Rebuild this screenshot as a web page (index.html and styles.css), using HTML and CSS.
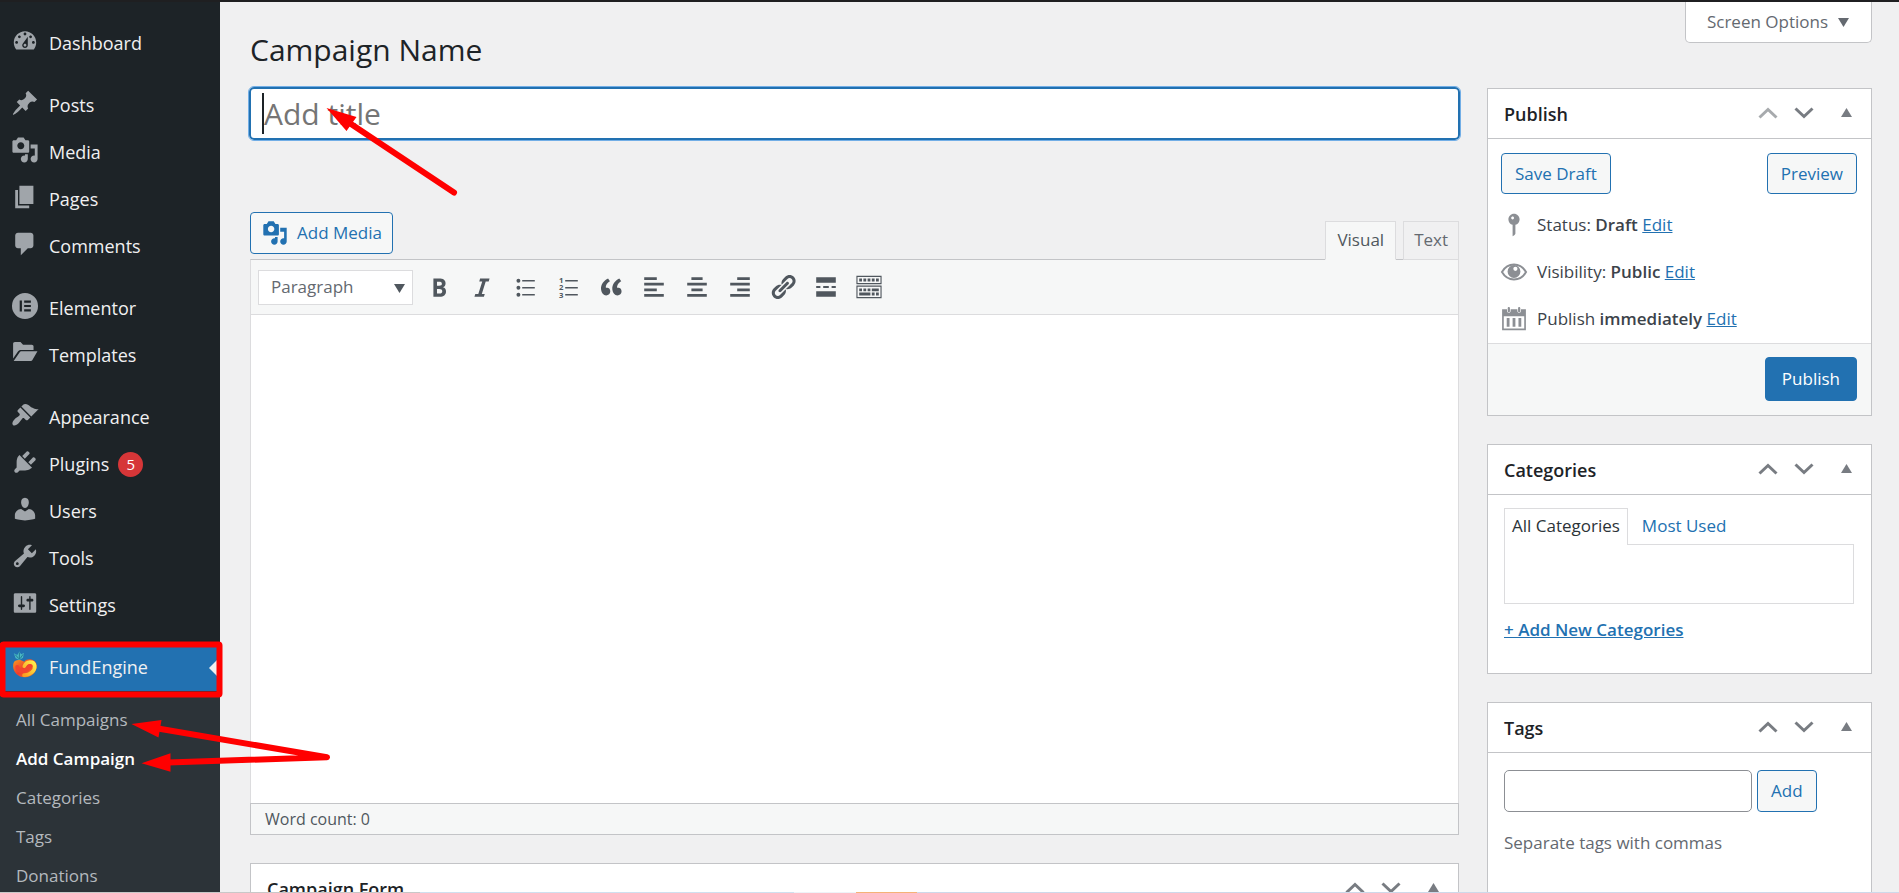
FILE: index.html
```html
<!DOCTYPE html>
<html lang="en">
<head>
    <meta charset="UTF-8">
    <meta name="viewport" content="width=device-width, initial-scale=1.0">
    <title>Add Campaign</title>
    <link rel="stylesheet" href="styles.css">
</head>
<body>
    <!-- shared shapes -->
    <svg class="defs" aria-hidden="true">
        <symbol id="media" viewBox="0 0 20 20">
            <path d="M13 11V4c0-.55-.45-1-1-1h-1.67L9 1H5L3.67 3H2c-.55 0-1 .45-1 1v7c0 .55.45 1 1 1h10c.55 0 1-.45 1-1zM7 4.5c1.38 0 2.5 1.12 2.5 2.5S8.38 9.5 7 9.5 4.500 8.380 4.500 7 5.620 4.500 7 4.500zM14 6h5v10.500c0 1.380-1.120 2.500-2.500 2.500S14 17.880 14 16.500s1.120-2.500 2.500-2.500c.17 0 .34.02.5.05V9h-3V6zm-4 8.050V13h2v3.500c0 1.380-1.120 2.500-2.500 2.500S7 17.880 7 16.500 8.120 14 9.500 14c.17 0 .34.02.5.05z"/>
        </symbol>
        <symbol id="up" viewBox="0 0 20 12"><path d="M1.500 10.500L10 2.500l8.500 8" fill="none" stroke="currentColor" stroke-width="3"/></symbol>
        <symbol id="down" viewBox="0 0 20 12"><path d="M1.500 1.500L10 9.500l8.500-8" fill="none" stroke="currentColor" stroke-width="3"/></symbol>
        <symbol id="toggle" viewBox="0 0 11 9"><path d="M5.500 0L11 9H0z"/></symbol>
        <symbol id="caret" viewBox="0 0 11 9"><path d="M0 0h11L5.500 9z"/></symbol>
    </svg>

    <div class="topbar"></div>
    <div class="admin">
        <nav class="sidebar" aria-label="Main menu">
            <ul class="menu">
                <li><a href="#"><svg class="icon" viewBox="0 0 20 20"><path fill-rule="evenodd" d="M3.76 16h12.48c1.1-1.37 1.76-3.11 1.76-5 0-4.42-3.58-8-8-8s-8 3.58-8 8c0 1.89.66 3.63 1.76 5zM10 4c.55 0 1 .45 1 1s-.45 1-1 1-1-.45-1-1 .45-1 1-1zM6 6c.55 0 1 .45 1 1s-.45 1-1 1-1-.45-1-1 .45-1 1-1zm8 0c.55 0 1 .45 1 1s-.45 1-1 1-1-.45-1-1 .45-1 1-1zm-5.370 5.550L12 7v6c0 1.1-.9 2-2 2s-2-.9-2-2c0-.57.24-1.080.63-1.450zM4 10c.55 0 1 .45 1 1s-.45 1-1 1-1-.45-1-1 .45-1 1-1zm12 0c.55 0 1 .45 1 1s-.45 1-1 1-1-.45-1-1 .45-1 1-1zm-5 3c0-.55-.45-1-1-1s-1 .45-1 1 .45 1 1 1 1-.45 1-1z"/></svg><span>Dashboard</span></a></li>
                <li class="separated"><a href="#"><svg class="icon" viewBox="0 0 20 20"><path d="M10.440 3.020l1.820-1.820 6.360 6.350-1.830 1.820c-1.050-.68-2.480-.57-3.410.36l-.75.75c-.92.93-1.040 2.350-.35 3.410l-1.830 1.820-2.410-2.410-2.800 2.790c-.42.42-3.380 2.710-3.800 2.290s1.860-3.390 2.280-3.810l2.790-2.790L4.100 9.360l1.830-1.820c1.050.69 2.480.57 3.400-.36l.75-.75c.93-.92 1.050-2.350.36-3.410z"/></svg><span>Posts</span></a></li>
                <li><a href="#"><svg class="icon"><use href="#media"/></svg><span>Media</span></a></li>
                <li><a href="#"><svg class="icon" viewBox="0 0 20 20"><path d="M6 15V2h10v13H6zm-1 1h8v2H3V5h2v11z"/></svg><span>Pages</span></a></li>
                <li><a href="#"><svg class="icon" viewBox="0 0 20 20"><path d="M5 2h9c1.100 0 2 .9 2 2v7c0 1.100-.9 2-2 2h-2l-5 5v-5H5c-1.100 0-2-.9-2-2V4c0-1.100.9-2 2-2z"/></svg><span>Comments</span></a></li>
                <li class="separated"><a href="#"><svg class="icon" viewBox="0 0 20 20"><path fill-rule="evenodd" d="M10 .7a9.300 9.300 0 1 1 0 18.600 9.300 9.300 0 0 1 0-18.600zM6.200 6v8h1.600V6zM9.400 6v1.600h4.800V6zm0 3.200v1.600h4.800V9.200zm0 3.200V14h4.800v-1.600z"/></svg><span>Elementor</span></a></li>
                <li><a href="#"><svg class="icon" viewBox="0 0 20 20"><path d="M1.500 14V3.500c0-.8.500-1.300 1.300-1.300h4l1.800 1.900h6.200c.8 0 1.300.5 1.300 1.300v2.400H7.200c-.9 0-1.500.3-2.100 1z"/><path d="M1.900 15.800l4.200-6.200c.4-.6.900-.8 1.600-.8h11.200l-3.400 5.900c-.4.7-.9 1.100-1.800 1.100z"/></svg><span>Templates</span></a></li>
                <li class="separated"><a href="#"><svg class="icon" viewBox="0 0 20 20"><path d="M14.480 11.060L7.410 3.990l1.500-1.500c.5-.56 2.300-.47 3.510.32 1.210.8 1.430 1.280 2.910 2.100 1.180.64 2.450 1.260 4.450.85zm-.71.71L6.700 4.700 4.930 6.470c-.39.39-.39 1.020 0 1.410l1.060 1.060c.39.39.39 1.030 0 1.420-.6.600-1.430 1.110-2.210 1.690-.35.26-.7.530-1.010.84C1.430 14.230.4 16.080 1.400 17.070c.99 1 2.840-.03 4.180-1.360.31-.31.58-.66.85-1.020.57-.78 1.080-1.610 1.690-2.210.39-.39 1.020-.39 1.410 0l1.060 1.060c.39.39 1.020.39 1.410 0z"/></svg><span>Appearance</span></a></li>
                <li><a href="#"><svg class="icon" viewBox="0 0 20 20"><path d="M13.110 4.360L9.870 7.600 8 5.730l3.240-3.240c.35-.34 1.050-.2 1.560.32.52.51.66 1.210.31 1.550zm-8 1.770l.91-1.120 9.010 9.010-1.190.84c-.71.71-2.630 1.160-3.820 1.160H6.140L4.900 17.260c-.59.59-1.540.59-2.120 0-.59-.58-.59-1.530 0-2.120l1.240-1.240v-3.880c0-1.130.4-3.190 1.090-3.890zm7.260 3.970l3.240-3.240c.34-.35 1.040-.21 1.550.31.52.51.66 1.210.31 1.550l-3.240 3.250z"/></svg><span>Plugins</span><span class="count">5</span></a></li>
                <li><a href="#"><svg class="icon" viewBox="0 0 20 20"><path d="M10 9.250c-2.270 0-2.730-3.440-2.730-3.440C7 4.020 7.820 2 9.970 2c2.160 0 2.980 2.020 2.710 3.810 0 0-.41 3.440-2.680 3.440zm0 2.570L12.720 10c2.390 0 4.520 2.330 4.520 4.530v2.490s-3.650 1.130-7.240 1.130c-3.650 0-7.240-1.130-7.240-1.130v-2.490c0-2.250 1.940-4.480 4.470-4.480z"/></svg><span>Users</span></a></li>
                <li><a href="#"><svg class="icon" viewBox="0 0 20 20"><path fill-rule="evenodd" d="M16.680 9.770c-1.340 1.340-3.300 1.670-4.950.99l-5.410 6.520c-.99.99-2.590.99-3.580 0s-.99-2.590 0-3.570l6.520-5.420c-.68-1.650-.35-3.610.99-4.950 1.280-1.280 3.120-1.620 4.720-1.060l-2.890 2.890 2.820 2.820 2.860-2.870c.53 1.580.18 3.390-1.080 4.650zM3.810 16.210c.4.390 1.040.39 1.430 0 .4-.4.4-1.040 0-1.430-.39-.4-1.030-.4-1.430 0-.39.39-.39 1.030 0 1.430z"/></svg><span>Tools</span></a></li>
                <li><a href="#"><svg class="icon" viewBox="0 0 20 20"><path fill-rule="evenodd" d="M18 16V4c0-.55-.45-1-1-1H3c-.55 0-1 .45-1 1v12c0 .55.45 1 1 1h14c.55 0 1-.45 1-1zM8 11h1c.55 0 1 .45 1 1s-.45 1-1 1H8v1.500c0 .28-.22.5-.5.5s-.5-.22-.5-.5V13H6c-.55 0-1-.45-1-1s.45-1 1-1h1V5.500c0-.28.22-.5.5-.5s.5.22.5.5V11zm5-2h-1c-.55 0-1-.45-1-1s.45-1 1-1h1V5.500c0-.28.22-.5.5-.5s.5.22.5.5V7h1c.55 0 1 .45 1 1s-.45 1-1 1h-1v5.500c0 .28-.22.5-.5.5s-.5-.22-.5-.5V9z"/></svg><span>Settings</span></a></li>
                <li class="separated current">
                    <a href="#"><svg class="icon" viewBox="0 0 20 20">
                        <defs>
                            <linearGradient id="fruit" x1="0" y1="0" x2="1" y2="1"><stop offset="0" stop-color="#f9a01f"/><stop offset=".5" stop-color="#ee3a2c"/><stop offset="1" stop-color="#f7931e"/></linearGradient>
                            <linearGradient id="peel" x1="0" y1="1" x2="1" y2="0"><stop offset="0" stop-color="#f9a01f"/><stop offset="1" stop-color="#fff04d"/></linearGradient>
                        </defs>
                        <path d="M2.800 7.200C5 5.800 7.500 6.400 9.400 7.600c2.600-3.200 8.600-1.800 9 2.600.4 4.700-4 8.800-8.600 8.600C5 18.600 1.600 15 1.500 11c0-1.700.3-3 1.300-3.800z" fill="url(#fruit)"/>
                        <path d="M9.500 11c1.400-4 6.900-4 7.400-.4.500 3.500-3.600 6.900-7.600 6.600" fill="none" stroke="url(#peel)" stroke-width="2.600" stroke-linecap="round"/>
                        <path d="M4.500 11.500c.6 3.400 5.300 4.200 8.600-.4" fill="none" stroke="#f2452f" stroke-width="3" stroke-linecap="round"/>
                        <path d="M2 1.600l2.500 1.200L6 .4l1.200 2 2-1-.6 3.400L6 6.400 3.300 5.100z" fill="#49b8c4"/>
                        <path d="M6 1v5M3 2.600L5.600 5.500M8.600 2.400L6.500 5.500" stroke="#1c6f8d" stroke-width=".6"/>
                    </svg><span>FundEngine</span></a>
                    <ul class="submenu">
                        <li><a href="#">All Campaigns</a></li>
                        <li><a href="#" class="active">Add Campaign</a></li>
                        <li><a href="#">Categories</a></li>
                        <li><a href="#">Tags</a></li>
                        <li><a href="#">Donations</a></li>
                    </ul>
                </li>
            </ul>
        </nav>

        <main class="page">
            <header class="page-head">
                <h1>Campaign Name</h1>
                <button class="screen-options" type="button">Screen Options <svg class="tri"><use href="#caret"/></svg></button>
            </header>

            <div class="columns">
                <div class="primary">
                    <div class="title-field">
                        <input type="text" aria-label="Add title" placeholder="Add title">
                        <span class="text-cursor"></span>
                    </div>

                    <div class="editor-tools">
                        <button class="button" type="button"><svg class="icon"><use href="#media"/></svg>Add Media</button>
                        <div class="tabs">
                            <button class="tab tab-on" type="button">Visual</button>
                            <button class="tab" type="button">Text</button>
                        </div>
                    </div>
                    <div class="editor">
                        <div class="toolbar">
                            <div class="format">
                                <select aria-label="Text format"><option>Paragraph</option><option>Heading 1</option></select>
                                <svg class="tri"><use href="#caret"/></svg>
                            </div>
                            <button type="button" aria-label="Bold"><svg viewBox="0 0 20 20"><path fill-rule="evenodd" d="M6 4v13h4.540c1.370 0 2.460-.33 3.260-1 .8-.66 1.200-1.580 1.200-2.770 0-.84-.17-1.510-.51-2.010s-.9-.85-1.670-1.030v-.09c.57-.1 1.020-.4 1.360-.9s.51-1.130.51-1.910c0-1.140-.39-1.980-1.170-2.500C12.750 4.260 11.500 4 9.780 4H6zm2.570 5.150V6.260h1.360c.73 0 1.270.11 1.610.32.34.22.51.58.51 1.070 0 .54-.16.92-.47 1.150s-.82.35-1.510.35h-1.500zm0 2.190h1.600c1.440 0 2.160.53 2.160 1.610 0 .6-.17 1.050-.51 1.340s-.86.43-1.570.43H8.570v-3.380z"/></svg></button>
                            <button type="button" aria-label="Italic"><svg viewBox="0 0 20 20"><path d="M14.780 6h-2.130l-2.800 9h2.120l-.62 2H4.600l.62-2h2.140l2.800-9H8.030l.62-2h6.750z"/></svg></button>
                            <button type="button" aria-label="Bulleted list"><svg viewBox="0 0 20 20"><circle cx="5.300" cy="5.500" r="1.400"/><circle cx="5.300" cy="10.500" r="1.400"/><circle cx="5.300" cy="15.500" r="1.400"/><path d="M8 5h9v1H8zM8 10h9v1H8zM8 15h9v1H8z"/></svg></button>
                            <button type="button" aria-label="Numbered list"><svg viewBox="0 0 20 20"><path d="M8 5h9v1H8zM8 10h9v1H8zM8 15h9v1H8z"/><text x="3.500" y="7.300" font-size="5.500">1</text><text x="3.500" y="12.400" font-size="5.500">2</text><text x="3.500" y="17.500" font-size="5.500">3</text></svg></button>
                            <button type="button" aria-label="Blockquote"><svg viewBox="0 0 20 20"><path d="M9.490 13.220c0-.74-.2-1.380-.61-1.900-.62-.78-1.830-.88-2.530-.72-.29-1.650 1.110-3.750 2.920-4.650L7.880 4c-2.730 1.300-5.420 4.280-4.960 8.050C3.210 14.430 4.590 16 6.540 16c.85 0 1.560-.25 2.120-.75s.83-1.180.83-2.030zm8.050 0c0-.74-.2-1.380-.61-1.900-.63-.78-1.830-.88-2.530-.72-.29-1.650 1.110-3.750 2.920-4.650L15.930 4c-2.730 1.300-5.410 4.280-4.950 8.050.29 2.380 1.660 3.950 3.610 3.950.85 0 1.560-.25 2.120-.75s.83-1.180.83-2.030z"/></svg></button>
                            <button type="button" aria-label="Align left"><svg viewBox="0 0 20 20"><path d="M3 3h9v2H3zM3 7h14v2H3zM3 11h9v2H3zM3 15h14v2H3z"/></svg></button>
                            <button type="button" aria-label="Align center"><svg viewBox="0 0 20 20"><path d="M6 3h8v2H6zM3 7h14v2H3zM6 11h8v2H6zM3 15h14v2H3z"/></svg></button>
                            <button type="button" aria-label="Align right"><svg viewBox="0 0 20 20"><path d="M8 3h9v2H8zM3 7h14v2H3zM8 11h9v2H8zM3 15h14v2H3z"/></svg></button>
                            <button type="button" aria-label="Insert link"><svg viewBox="0 0 20 20"><path d="M17.740 2.760c1.680 1.690 1.680 4.410 0 6.100l-1.530 1.520c-1.120 1.120-2.700 1.470-4.140 1.090l2.620-2.610.76-.77.76-.76c.84-.84.84-2.200 0-3.040-.84-.85-2.200-.85-3.040 0l-.77.76-3.380 3.380c-.37-1.440-.02-3.020 1.100-4.140l1.520-1.530c1.690-1.680 4.420-1.680 6.100 0zM8.590 13.430l5.340-5.340c.42-.42.42-1.100 0-1.520-.44-.43-1.130-.39-1.530 0l-5.330 5.340c-.42.42-.42 1.100 0 1.520.44.43 1.130.39 1.520 0zm-.76 2.290l4.140-4.150c.38 1.440.03 3.020-1.090 4.140l-1.520 1.530c-1.690 1.680-4.410 1.680-6.100 0-1.680-1.680-1.680-4.420 0-6.100l1.530-1.520c1.120-1.120 2.700-1.470 4.140-1.100l-4.140 4.150c-.85.84-.85 2.200 0 3.050.84.84 2.200.84 3.040 0z"/></svg></button>
                            <button type="button" aria-label="Read more tag"><svg viewBox="0 0 20 20"><path d="M3 3h14v4H3zM3 9.200h3v1.600H3zM8 9.200h4v1.600H8zM14 9.200h3v1.600h-3zM3 13h14v4H3z"/></svg></button>
                            <button type="button" aria-label="Toolbar toggle"><svg viewBox="0 0 20 20"><path fill-rule="evenodd" d="M1 2h18v6H1zM1.800 2.800v4.400h16.400V2.800zM1 9h18v9H1zM1.800 9.800v7.400h16.400V9.800z"/><path d="M3 4h2v2H3zM6 4h2v2H6zM9 4h2v2H9zM12 4h2v2h-2zM15 4h2v2h-2zM3 11h2v2H3zM6 11h2v2H6zM9 11h2v2H9zM12 11h5v2h-5zM3 14h8v2H3zM12 14h2v2h-2zM15 14h2v2h-2z"/></svg></button>
                        </div>
                        <textarea aria-label="Campaign content"></textarea>
                        <div class="status-bar">Word count: 0</div>
                    </div>

                    <section class="box">
                        <div class="box-head">
                            <h2>Campaign Form</h2>
                            <button type="button" aria-label="Move up"><svg class="chev"><use href="#up"/></svg></button>
                            <button type="button" aria-label="Move down"><svg class="chev"><use href="#down"/></svg></button>
                            <button type="button" aria-label="Toggle panel"><svg class="tri"><use href="#toggle"/></svg></button>
                        </div>
                    </section>
                </div>

                <aside class="side">
                    <section class="box">
                        <div class="box-head">
                            <h2>Publish</h2>
                            <button type="button" aria-label="Move up" disabled><svg class="chev"><use href="#up"/></svg></button>
                            <button type="button" aria-label="Move down"><svg class="chev"><use href="#down"/></svg></button>
                            <button type="button" aria-label="Toggle panel"><svg class="tri"><use href="#toggle"/></svg></button>
                        </div>
                        <div class="publish-actions">
                            <button class="button" type="button">Save Draft</button>
                            <button class="button" type="button">Preview</button>
                        </div>
                        <ul class="publish-info">
                            <li><svg class="icon" viewBox="0 0 20 20"><path fill-rule="evenodd" d="M14 6c0 1.860-1.280 3.410-3 3.860V16c0 1-2 2-2 2V9.860c-1.720-.45-3-2-3-3.860 0-2.210 1.790-4 4-4s4 1.790 4 4zM8 5c0 .55.45 1 1 1s1-.45 1-1-.45-1-1-1-1 .45-1 1z"/></svg><span>Status: <b>Draft</b> <a href="#">Edit</a></span></li>
                            <li><svg class="icon" viewBox="0 0 20 20"><path d="M1.400 10C5.500 2.900 14.500 2.900 18.600 10 14.500 17.100 5.500 17.100 1.400 10z" fill="none" stroke="currentColor" stroke-width="1.400"/><path fill-rule="evenodd" d="M10 5a4.600 4.600 0 1 1 0 9.200A4.600 4.600 0 0 1 10 5zm1 1.200a1.500 1.500 0 1 0 0 3 1.500 1.500 0 0 0 0-3z"/></svg><span>Visibility: <b>Public</b> <a href="#">Edit</a></span></li>
                            <li><svg class="icon" viewBox="0 0 20 20"><path fill-rule="evenodd" d="M1.500 3H5v1.200c0 1.700 2.600 1.700 2.600 0V3h4.800v1.200c0 1.700 2.600 1.700 2.600 0V3h3.500v15h-17zM2.700 8v8.800h14.600V8z"/><path d="M5.500 2.300c0-1.100 1.600-1.100 1.600 0v2.200c0 1.100-1.600 1.100-1.600 0zM12.900 2.300c0-1.100 1.600-1.100 1.600 0v2.200c0 1.100-1.600 1.100-1.600 0zM4.800 9.200h2v6.400h-2zM9 9.200h2v6.400H9zM13.200 9.200h2v6.400h-2z"/></svg><span>Publish <b>immediately</b> <a href="#">Edit</a></span></li>
                        </ul>
                        <div class="publish-foot">
                            <button class="button button-primary" type="button">Publish</button>
                        </div>
                    </section>

                    <section class="box">
                        <div class="box-head">
                            <h2>Categories</h2>
                            <button type="button" aria-label="Move up"><svg class="chev"><use href="#up"/></svg></button>
                            <button type="button" aria-label="Move down"><svg class="chev"><use href="#down"/></svg></button>
                            <button type="button" aria-label="Toggle panel"><svg class="tri"><use href="#toggle"/></svg></button>
                        </div>
                        <div class="box-body categories">
                            <div class="cat-tabs">
                                <a href="#" class="cat-on">All Categories</a>
                                <a href="#">Most Used</a>
                            </div>
                            <div class="cat-panel"></div>
                            <a href="#" class="add-new">+ Add New Categories</a>
                        </div>
                    </section>

                    <section class="box">
                        <div class="box-head">
                            <h2>Tags</h2>
                            <button type="button" aria-label="Move up"><svg class="chev"><use href="#up"/></svg></button>
                            <button type="button" aria-label="Move down"><svg class="chev"><use href="#down"/></svg></button>
                            <button type="button" aria-label="Toggle panel"><svg class="tri"><use href="#toggle"/></svg></button>
                        </div>
                        <div class="box-body tags">
                            <div class="tag-row">
                                <input type="text" aria-label="Add new tag">
                                <button class="button" type="button">Add</button>
                            </div>
                            <p>Separate tags with commas</p>
                        </div>
                    </section>
                </aside>
            </div>
        </main>
    </div>

    <!-- red guide marks over the menu and the title field -->
    <svg class="marks" viewBox="0 0 480 800" aria-hidden="true">
        <rect x="2.500" y="644.500" width="217" height="50" rx="1"/>
        <path d="M348 122L454 192.500M158 728.500L327 757.300L168 762.500"/>
        <path class="tip" d="M326.500 108l30 9-10 14zM131.500 724l30-4-3 17.500zM141.500 763.300l29-10v18.500z"/>
    </svg>
    <div class="bottom-strip"></div>
</body>
</html>
```

FILE: styles.css
```css
* {
    box-sizing: border-box;
}
body {
    margin: 0;
    background: #f0f0f1;
    color: #3c434a;
    font-family: "Segoe UI", "Open Sans", "Noto Sans", sans-serif;
    font-size: 17px;
    line-height: 24px;
}
ul {
    margin: 0;
    padding: 0;
    list-style: none;
}
h1, h2, p {
    margin: 0;
}
a {
    color: #2271b1;
}
button, input, select, textarea {
    font: inherit;
}
button {
    cursor: pointer;
}
svg {
    display: block;
    fill: currentColor;
}
.defs {
    position: absolute;
    width: 0;
    height: 0;
}
.icon {
    flex: none;
    width: 28px;
    height: 28px;
}
.tri {
    width: 11px;
    height: 9px;
}
.chev {
    width: 20px;
    height: 12px;
}
.topbar {
    height: 2px;
    background: #1f1f21;
}
.admin {
    display: flex;
    height: calc(100vh - 2px);
    overflow: hidden;
}

/* sidebar */
.sidebar {
    flex: none;
    width: 220px;
    padding-top: 18px;
    background: #1d2327;
}
.menu > li > a {
    display: flex;
    height: 47px;
    padding-left: 11px;
    color: #f0f0f1;
    font-size: 18px;
    line-height: 47px;
    text-decoration: none;
}
.menu .icon {
    margin: 7px 10px 0 0;
    color: #a0a5aa;
}
.separated {
    padding-top: 15px;
}
.count {
    width: 25px;
    height: 25px;
    margin: 11px 0 0 9px;
    border-radius: 50%;
    background: #d63638;
    color: #fff;
    font-size: 15px;
    line-height: 25px;
    text-align: center;
}
.current > a {
    position: relative;
    background: #2271b1;
}
.current > a::after {
    content: "";
    position: absolute;
    top: 13px;
    right: 0;
    border: 11px solid transparent;
    border-right-color: #f0f0f1;
    border-left-width: 0;
}
.submenu {
    height: 400px;
    padding-top: 9px;
    background: #2c3338;
}
.submenu a {
    display: block;
    padding-left: 16px;
    color: #b4b9be;
    line-height: 39px;
    text-decoration: none;
}
.submenu .active {
    color: #fff;
    font-weight: 600;
}

/* page */
.page {
    flex: 1;
    min-width: 0;
    padding: 0 27px 0 30px;
}
.page-head {
    display: flex;
    justify-content: space-between;
    align-items: flex-start;
    height: 85px;
}
h1 {
    padding-top: 28px;
    color: #1d2327;
    font-size: 30px;
    font-weight: 400;
    line-height: 40px;
}
.screen-options {
    display: flex;
    align-items: center;
    gap: 10px;
    height: 41px;
    padding: 0 22px 0 21px;
    border: 1px solid #c3c4c7;
    border-top: 0;
    border-radius: 0 0 5px 5px;
    background: #fff;
    color: #646970;
}
.columns {
    display: flex;
    gap: 28px;
}
.primary {
    flex: 1;
    min-width: 0;
}
.side {
    flex: none;
    width: 385px;
    padding-top: 1px;
}
.title-field {
    position: relative;
    margin: 0 -1px;
}
.title-field input {
    display: block;
    width: 100%;
    height: 53px;
    padding: 0 13px;
    border: 2px solid #2271b1;
    border-radius: 5px;
    outline: 1px solid #72aee6;
    background: #fff;
    font-size: 30px;
}
.title-field input::placeholder {
    color: #757575;
}
.text-cursor {
    position: absolute;
    top: 6px;
    left: 13px;
    width: 2px;
    height: 41px;
    background: #1d2327;
}
.button {
    height: 41px;
    padding: 0 13px;
    border: 1px solid #2271b1;
    border-radius: 4px;
    background: #f6f7f7;
    color: #2271b1;
}
.button-primary {
    height: 44px;
    padding: 0 16px;
    background: #2271b1;
    color: #fff;
}

/* editor */
.editor-tools {
    display: flex;
    justify-content: space-between;
    height: 47px;
    margin-top: 72px;
}
.editor-tools .button {
    display: flex;
    align-items: center;
    gap: 9px;
    height: 42px;
    padding: 0 10px 0 11px;
}
.editor-tools .icon {
    width: 26px;
    height: 26px;
}
.tabs {
    display: flex;
    align-items: flex-end;
    gap: 7px;
    height: 48px;
}
.tab {
    position: relative;
    height: 39px;
    padding: 0 10px 2px;
    border: 1px solid #dcdcde;
    background: #f0f0f1;
    color: #646970;
}
.tab-on {
    padding: 0 11px 2px;
    border-bottom-color: #f6f7f7;
    background: #f6f7f7;
    color: #50575e;
}
.editor {
    border: 1px solid #dcdcde;
    border-top-color: #c3c4c7;
    background: #fff;
}
.toolbar {
    display: flex;
    align-items: center;
    gap: 15px;
    height: 55px;
    padding: 0 7px;
    border-bottom: 1px solid #dcdcde;
    background: #f6f7f7;
}
.toolbar button {
    padding: 0;
    border: 0;
    background: none;
    color: #50575e;
}
.toolbar button svg {
    width: 28px;
    height: 28px;
}
.toolbar text {
    font-weight: 700;
}
.format {
    position: relative;
    width: 155px;
    margin-right: -3px;
}
.format select {
    display: block;
    width: 100%;
    height: 35px;
    padding: 0 12px;
    border: 1px solid #dcdcde;
    border-radius: 0;
    background: #fff;
    color: #646970;
    appearance: none;
}
.format .tri {
    position: absolute;
    top: 14px;
    right: 8px;
    color: #50575e;
    pointer-events: none;
}
.editor textarea {
    display: block;
    width: 100%;
    height: 488px;
    border: 0;
    background: #fff;
    resize: none;
}
.status-bar {
    margin: 0 -1px -1px;
    padding: 3px 14px;
    border: 1px solid #c3c4c7;
    background: #f6f7f7;
    color: #50575e;
    font-size: 16px;
}

/* boxes */
.box {
    margin-bottom: 28px;
    border: 1px solid #c3c4c7;
    background: #fff;
}
.editor + .box {
    margin-top: 28px;
}
.box-head {
    display: flex;
    align-items: center;
    height: 50px;
    padding: 0 14px 0 16px;
    border-bottom: 1px solid #c3c4c7;
}
.box-head h2 {
    flex: 1;
    color: #1d2327;
    font-size: 18px;
    font-weight: 600;
}
.box-head button {
    display: flex;
    justify-content: center;
    width: 36px;
    padding: 0 0 2px;
    border: 0;
    background: none;
    color: #787c82;
}
.box-head button:disabled {
    color: #a7aaad;
}
.box-head button:last-child {
    width: 22px;
    margin-left: 13px;
}
.publish-actions {
    display: flex;
    justify-content: space-between;
    padding: 14px 14px 7px 13px;
}
.publish-info li {
    display: flex;
    align-items: center;
    gap: 9px;
    height: 47px;
    padding-left: 12px;
}
.publish-info .icon {
    color: #8c8f94;
}
.publish-info b {
    font-weight: 600;
}
.publish-foot {
    display: flex;
    justify-content: flex-end;
    margin-top: 1px;
    padding: 13px 14px 14px;
    border-top: 1px solid #dcdcde;
    background: #f6f7f7;
}
.box-body {
    padding: 13px 17px 31px 16px;
}
.cat-tabs {
    display: flex;
    height: 36px;
}
.cat-tabs a {
    height: 36px;
    padding: 0 14px;
    line-height: 36px;
    text-decoration: none;
}
.cat-tabs .cat-on {
    height: 37px;
    padding: 0 7px;
    border: 1px solid #dcdcde;
    border-bottom: 0;
    background: #fff;
    color: #2c3338;
    line-height: 34px;
    z-index: 1;
}
.cat-panel {
    height: 60px;
    border: 1px solid #dcdcde;
}
.add-new {
    display: inline-block;
    margin-top: 14px;
    font-weight: 600;
}
.tags {
    padding-top: 17px;
    padding-bottom: 50px;
}
.tag-row {
    display: flex;
    gap: 5px;
}
.tag-row input {
    width: 248px;
    height: 42px;
    border: 1px solid #8c8f94;
    border-radius: 5px;
    background: #fff;
}
.tag-row .button {
    height: 42px;
}
.tags p {
    margin-top: 19px;
    color: #646970;
}

.marks {
    position: absolute;
    top: 0;
    left: 0;
    width: 480px;
    height: 800px;
    fill: none;
    stroke: #f00;
    stroke-width: 6;
    stroke-linecap: round;
    stroke-linejoin: round;
    pointer-events: none;
}
.marks .tip {
    fill: #f00;
    stroke: none;
}
.bottom-strip {
    position: fixed;
    right: 0;
    bottom: 0;
    left: 0;
    height: 1px;
    background: linear-gradient(90deg, #c8c8c8 420px, #cfe0ef 420px 794px, #eef3f8 794px 856px, #f5b277 856px 917px, #cdd9ea 917px);
}
```
